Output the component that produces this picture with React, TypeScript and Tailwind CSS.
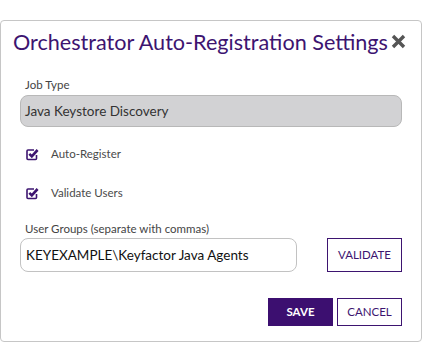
const CheckIcon = () => (
  <svg width="13" height="13" viewBox="0 0 13 13" fill="none">
    <path
      d="M10.5 7 V10.5 Q10.5 11.5 9.5 11.5 H2 Q1 11.5 1 10.5 V3 Q1 2 2 2 H8"
      stroke="#3d1470"
      strokeWidth="1.6"
    />
    <path
      d="M3.3 5.8 L5.8 8.3 L11.6 2"
      stroke="#3d1470"
      strokeWidth="2.6"
      strokeLinejoin="miter"
    />
  </svg>
);

const Check = ({ label }: { label: string }) => (
  <div className="flex items-center gap-[12px] pl-[6px] h-[14px]">
    <CheckIcon />
    <span className="text-[11.5px] text-[#4a4a4a]">{label}</span>
  </div>
);

const App = () => {
  return (
    <div
      className="w-[422px] h-[342px] bg-white pt-[20px]"
      style={{ fontFamily: "Lato, 'Open Sans', sans-serif" }}
    >
      <div className="h-[322px] border border-[#c6c6c6] rounded-[4px] flex flex-col">
        <div className="flex items-start pl-[12px] pt-[9px]">
          <h1 className="text-[21.6px] leading-[24px] text-[#3d1470]">
            Orchestrator Auto-Registration Settings
          </h1>
          <svg width="17" height="17" viewBox="0 0 17 17" className="mt-[3px] ml-[2px]">
            <path
              d="M3 3 L14 14 M14 3 L3 14"
              stroke="#555"
              strokeWidth="3.4"
            />
          </svg>
        </div>

        <div className="px-[19px] pt-[24px] flex flex-col">
          <label className="text-[11.5px] leading-[14px] text-[#444] pl-[5px]">Job Type</label>
          <div className="mt-[3px] h-[32px] rounded-[8px] border border-[#b8b8b8] bg-[#d2d2d4] flex items-center px-[4px] text-[13.5px] text-[#333]">
            Java Keystore Discovery
          </div>

          <div className="mt-[20px]">
            <Check label="Auto-Register" />
          </div>
          <div className="mt-[25px]">
            <Check label="Validate Users" />
          </div>

          <label className="mt-[22px] text-[11.5px] leading-[14px] text-[#444] pl-[5px]">
            User Groups (separate with commas)
          </label>
          <div className="mt-[2px] flex items-center justify-between">
            <div className="w-[277px] h-[34px] rounded-[8px] border border-[#c2c2c2] flex items-center px-[5px] text-[13.5px] text-[#111]">
              KEYEXAMPLE\Keyfactor Java Agents
            </div>
            <button className="w-[75px] h-[34px] border border-[#3d1470] text-[11.5px] text-[#3d1470] bg-white">
              VALIDATE
            </button>
          </div>

          <div className="mt-[26px] flex justify-end gap-[4px]">
            <button className="w-[65px] h-[28px] bg-[#3c0f70] text-white text-[11.5px] font-bold">
              SAVE
            </button>
            <button className="w-[65px] h-[28px] border border-[#3d1470] text-[#3d1470] text-[11.5px] bg-white">
              CANCEL
            </button>
          </div>
        </div>
      </div>
    </div>
  );
};

export default App;
